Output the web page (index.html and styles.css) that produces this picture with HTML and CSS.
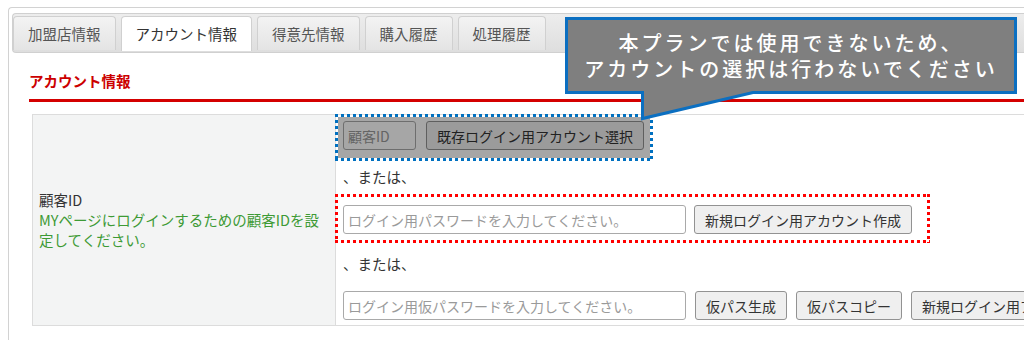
FILE: index.html
```html
<!DOCTYPE html>
<html lang="ja">
<head>
  <meta charset="UTF-8" />
  <title>アカウント情報</title>
  <link rel="stylesheet" href="styles.css">
</head>
<body>
  <div class="panel">
    <ul class="tabs">
      <li>加盟店情報</li>
      <li class="active">アカウント情報</li>
      <li>得意先情報</li>
      <li>購入履歴</li>
      <li>処理履歴</li>
    </ul>

    <div class="content">
      <h2 class="section-title">アカウント情報</h2>
      <table class="form-table">
        <tr>
          <th>
            <span class="label">顧客ID</span>
            <span class="note">MYページにログインするための顧客IDを設定してください。</span>
          </th>
          <td>
            <div class="ctrl-row">
              <input type="text" class="input-id" placeholder="顧客ID" />
              <button>既存ログイン用アカウント選択</button>
            </div>
            <p class="or">、または、</p>
            <div class="ctrl-row row-new">
              <input type="text" class="input-pass" placeholder="ログイン用パスワードを入力してください。" />
              <button>新規ログイン用アカウント作成</button>
            </div>
            <p class="or">、または、</p>
            <div class="ctrl-row row-temp">
              <input type="text" class="input-pass" placeholder="ログイン用仮パスワードを入力してください。" />
              <button>仮パス生成</button>
              <button>仮パスコピー</button>
              <button>新規ログイン用アカウント作成</button>
            </div>

            <!-- annotations drawn over the form -->
            <div class="mark mark-blue"></div>
            <div class="mark mark-red"></div>
          </td>
        </tr>
      </table>
    </div>
  </div>

  <div class="callout">
    <svg class="callout-shape" width="452" height="104" viewBox="0 0 452 104">
      <path d="M1.5,1.5 H450.5 V75.5 H188 L77.5,101.5 V75.5 H1.5 Z" fill="#7f7f7f" stroke="#0b6fc1" stroke-width="3" stroke-linejoin="miter" />
    </svg>
    <div class="callout-text">
      <span>本プランでは使用できないため、</span>
      <span>アカウントの選択は行わないでください</span>
    </div>
  </div>
</body>
</html>
```

FILE: styles.css
```css
html, body {
  overflow: hidden;
}
body {
  margin: 0;
  position: relative;
  width: 1024px;
  height: 340px;
  font-family: "Noto Sans CJK JP", "Noto Sans", sans-serif;
  font-size: 14.5px;
  color: #333;
  background: #fff;
}
.panel {
  box-sizing: border-box;
  width: 1016px;
  height: 333px;
  margin: 7px 0 0 8px;
  padding: 5px 0 0 3px;
  border: 1px solid #d2d2d2;
  border-right: none;
  border-bottom: none;
  border-radius: 4px 0 0 0;
  overflow: hidden;
}
.tabs {
  display: flex;
  align-items: flex-start;
  gap: 5px;
  list-style: none;
  margin: 0;
  padding: 2px 0 0 0;
  height: 36px;
  border: 1px solid #d0d0d0;
  border-right: none;
  border-radius: 4px 0 0 4px;
  background: linear-gradient(#ededed, #dedede);
}
.tabs li {
  height: 33px;
  line-height: 33px;
  padding: 0 14px;
  border: 1px solid #d0d0d0;
  border-bottom: none;
  border-radius: 4px 4px 0 0;
  background: linear-gradient(#f3f3f3, #e4e4e4);
  color: #555;
  white-space: nowrap;
}
.tabs li.active {
  height: 34px;
  background: #fff;
  color: #333;
  position: relative;
}
.content {
  padding-left: 17px;
}
.section-title {
  margin: 18px 0 0 0;
  padding-bottom: 8px;
  line-height: 20px;
  font-size: 14.5px;
  font-weight: bold;
  color: #cc0000;
  border-bottom: 3px solid #d40000;
}
.form-table {
  margin: 12px 0 0 3px;
  border-collapse: collapse;
  width: 1100px;
}
.form-table th,
.form-table td {
  border: 1px solid #dcdcdc;
}
.form-table th {
  width: 289px;
  padding: 0 7px 0 6px;
  background: #f3f4f4;
  text-align: left;
  font-weight: normal;
  vertical-align: middle;
  line-height: 20px;
}
.label {
  display: block;
  color: #333;
}
.note {
  display: block;
  color: #3d9a35;
}
.form-table td {
  position: relative;
  padding: 6px 0 5px 7px;
  vertical-align: top;
}
.ctrl-row {
  display: flex;
  gap: 10px;
  height: 29px;
}
.row-new {
  gap: 8px;
  margin-top: 18px;
}
.row-temp {
  gap: 9px;
  margin-top: 17px;
}
.or {
  margin: 17px 0 0 0;
  line-height: 20px;
}
.row-new + .or {
  margin-top: 20px;
}
input {
  box-sizing: border-box;
  height: 29px;
  padding: 0 4px;
  border: 1px solid #a9a9a9;
  border-radius: 3px;
  font-family: inherit;
  font-size: 14px;
  color: #333;
  background: #fff;
}
input::placeholder {
  color: #9a9a9a;
}
.input-id {
  width: 73px;
}
.input-pass {
  width: 343px;
}
button {
  box-sizing: border-box;
  flex-shrink: 0;
  height: 29px;
  padding: 0 10px;
  border: 1px solid #929292;
  border-radius: 3px;
  background: #efefef;
  font-family: inherit;
  font-size: 14px;
  color: #333;
  white-space: nowrap;
}
.mark {
  position: absolute;
  left: -1px;
  --dot: transparent;
  background:
    repeating-linear-gradient(90deg, var(--dot) 0 3px, transparent 3px 6px) left top / 100% 3px no-repeat,
    repeating-linear-gradient(90deg, var(--dot) 0 3px, transparent 3px 6px) left bottom / 100% 3px no-repeat,
    repeating-linear-gradient(180deg, var(--dot) 0 3px, transparent 3px 6px) left top / 3px 100% no-repeat,
    repeating-linear-gradient(180deg, var(--dot) 0 3px, transparent 3px 6px) right top / 3px 100% no-repeat;
}
.mark-blue {
  --dot: #0070c0;
  top: -1px;
  width: 318px;
  height: 47px;
}
.mark-blue::after {
  content: "";
  position: absolute;
  inset: 3px;
  background: rgba(0, 0, 0, 0.35);
}
.mark-red {
  --dot: #ff0000;
  top: 79px;
  width: 595px;
  height: 49px;
}
.callout {
  position: absolute;
  left: 565px;
  top: 17px;
  width: 452px;
  height: 77px;
}
.callout-shape {
  position: absolute;
  left: 0;
  top: 0;
  overflow: visible;
}
.callout-text {
  position: relative;
  height: 77px;
  display: flex;
  flex-direction: column;
  justify-content: center;
  align-items: center;
  color: #fff;
  font-size: 20px;
  font-weight: 500;
  line-height: 26px;
  letter-spacing: 3px;
}
```
